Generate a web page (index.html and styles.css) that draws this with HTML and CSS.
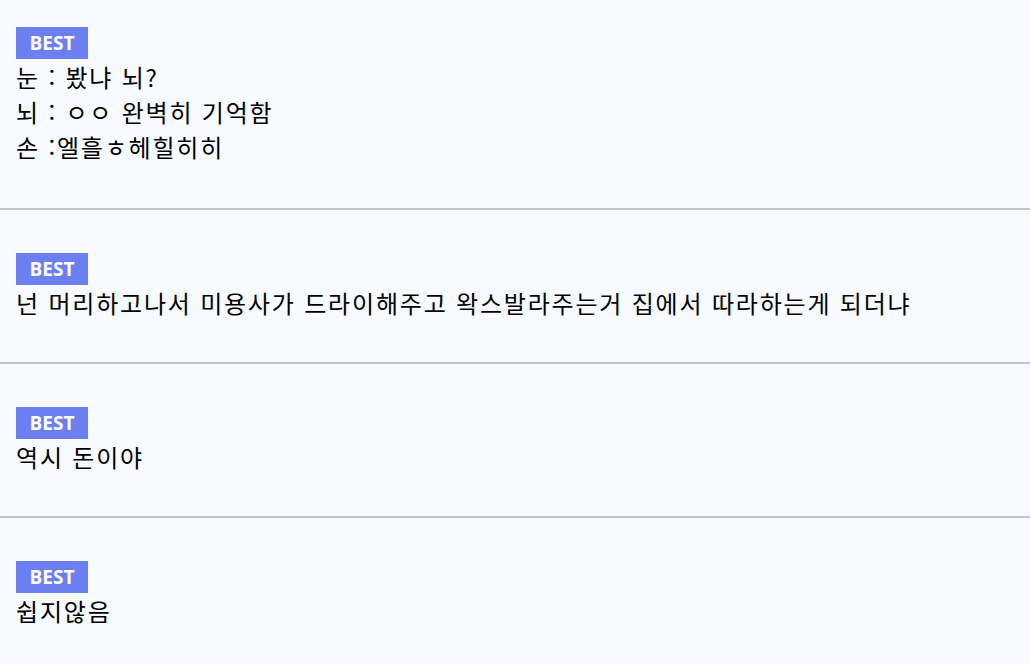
FILE: index.html
```html
<!DOCTYPE html>
<html lang="ko">
<head>
  <meta charset="UTF-8">
  <meta name="viewport" content="width=device-width, initial-scale=1">
  <title>BEST 댓글</title>
  <link rel="stylesheet" href="styles.css">
</head>
<body>
  <ul class="comment-list">
    <li class="comment">
      <span class="badge">BEST</span>
      <p class="comment-text">눈 : 봤냐 뇌?<br>뇌 : ㅇㅇ 완벽히 기억함<br>손 :엘흘ㅎ헤힐히히</p>
    </li>
    <li class="comment">
      <span class="badge">BEST</span>
      <p class="comment-text">넌 머리하고나서 미용사가 드라이해주고 왁스발라주는거 집에서 따라하는게 되더냐</p>
    </li>
    <li class="comment">
      <span class="badge">BEST</span>
      <p class="comment-text">역시 돈이야</p>
    </li>
    <li class="comment">
      <span class="badge">BEST</span>
      <p class="comment-text">쉽지않음</p>
    </li>
  </ul>
</body>
</html>
```

FILE: styles.css
```css
* { box-sizing: border-box; }

body {
  margin: 0;
  background: #f7faff;
  color: #000;
  font-family: "Noto Sans CJK KR", "Noto Sans", sans-serif;
}

.comment-list {
  list-style: none;
  margin: 0;
  padding: 0;
}

.comment {
  padding: 43px 16px 42px;
  border-bottom: 2px solid #c4c4c6;
}

.comment:first-child {
  padding-top: 27px;
  padding-bottom: 44px;
}

.comment:last-child {
  border-bottom: none;
}

.badge {
  display: flex;
  align-items: center;
  justify-content: center;
  width: 72px;
  height: 32px;
  background: #6b7ff0;
  color: #fff;
  font-family: "Open Sans", sans-serif;
  font-weight: 700;
  font-size: 19px;
}

.comment-text {
  margin: 0;
  font-size: 24px;
  line-height: 35px;
  letter-spacing: 1.8px;
}
```
